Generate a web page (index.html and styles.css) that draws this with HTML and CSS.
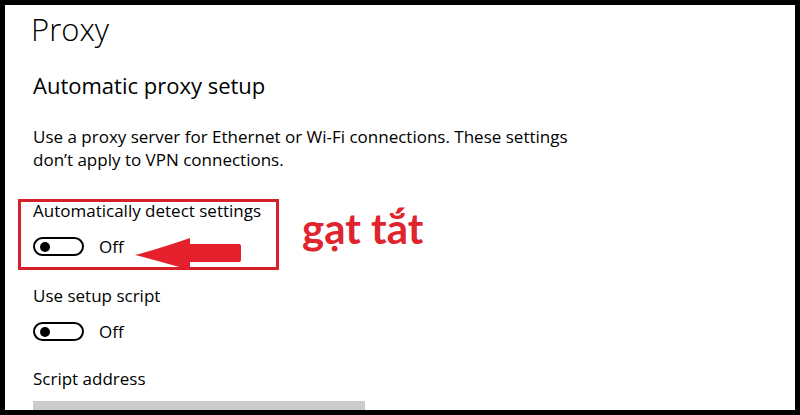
FILE: index.html
```html
<!DOCTYPE html>
<html lang="en">
<head>
  <meta charset="UTF-8">
  <title>Proxy</title>
  <link rel="stylesheet" href="styles.css">
</head>
<body>

<div class="frame">
  <div class="settings">
    <h1 class="page-title">Proxy</h1>
    <h2 class="section-title">Automatic proxy setup</h2>
    <p class="note">Use a proxy server for Ethernet or Wi-Fi connections. These settings<br>don’t apply to VPN connections.</p>

    <div class="setting setting-first">
      <div class="setting-label">Automatically detect settings</div>
      <div class="switch-row">
        <span class="switch"><span class="knob"></span></span>
        <span class="switch-state">Off</span>
      </div>
    </div>

    <div class="setting">
      <div class="setting-label">Use setup script</div>
      <div class="switch-row">
        <span class="switch"><span class="knob"></span></span>
        <span class="switch-state">Off</span>
      </div>
    </div>

    <div class="setting setting-address">
      <div class="setting-label">Script address</div>
      <div class="address-box"></div>
    </div>
  </div>

  <!-- annotation -->
  <div class="highlight"></div>
  <svg class="arrow" width="110" height="36" viewBox="0 0 110 36">
    <path d="M0 17 Q20 12 55 0 L55 6 L104 6 Q106 6 106 8 L106 22 Q106 24 104 24 L55 24 L55 32 Q20 22 0 17 Z" fill="#e3202b"/>
  </svg>
  <div class="hint">gạt tắt</div>
</div>

</body>
</html>
```

FILE: styles.css
```css
/* Page */
body {
  margin: 0;
  background-color: #000;
}

.frame {
  position: relative;
  width: 800px;
  height: 415px;
  box-sizing: border-box;
  border: 5px solid #000;
  background-color: #fff;
  overflow: hidden;
  font-family: 'Open Sans', sans-serif;
  color: #000;
}

.settings {
  padding-left: 28px;
}

/* Headings */
.page-title {
  margin: 5px 0 0 -2px;
  font-size: 31px;
  font-weight: 300;
  line-height: 38px;
}

.section-title {
  margin: 23px 0 0;
  font-size: 22px;
  font-weight: 400;
  line-height: 28px;
}

.note {
  margin: 26px 0 0;
  font-size: 17px;
  line-height: 23px;
}

/* Toggle rows */
.setting {
  margin-top: 27px;
}

.setting-first {
  margin-top: 29px;
}

.setting-address {
  margin-top: 25px;
}

.setting-label {
  font-size: 17px;
  line-height: 22px;
}

.switch-row {
  display: flex;
  align-items: center;
  gap: 15px;
  margin-top: 13px;
}

.switch {
  display: flex;
  align-items: center;
  width: 51px;
  height: 19px;
  box-sizing: border-box;
  border: 2px solid #000;
  border-radius: 10px;
  padding-left: 5px;
}

.knob {
  width: 10px;
  height: 10px;
  border-radius: 50%;
  background-color: #000;
}

.switch-state {
  font-size: 17px;
}

.address-box {
  width: 332px;
  height: 24px;
  margin-top: 11px;
  background-color: #cccccc;
}

/* Annotation */
.highlight {
  position: absolute;
  left: 13px;
  top: 194px;
  width: 261px;
  height: 71px;
  box-sizing: border-box;
  border: 3px solid #d8202b;
}

.arrow {
  position: absolute;
  left: 130px;
  top: 233px;
}

.hint {
  position: absolute;
  left: 297px;
  top: 198px;
  font-family: 'Lato', sans-serif;
  font-size: 42px;
  font-weight: 700;
  color: #e0242d;
}
```
